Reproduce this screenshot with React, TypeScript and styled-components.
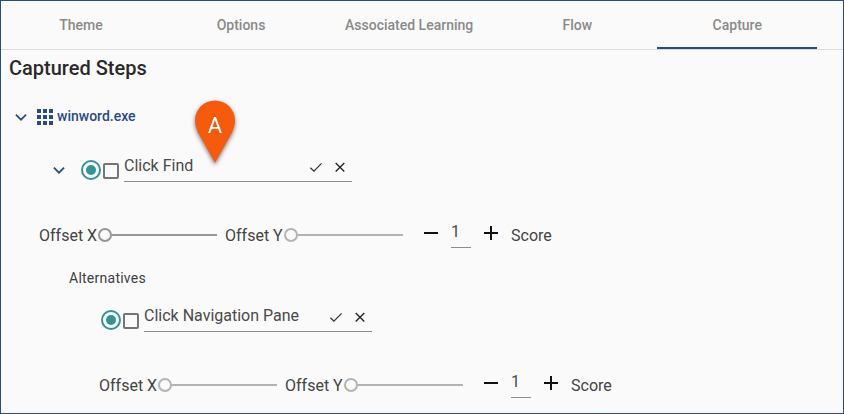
import React from "react";
import styled, { createGlobalStyle } from "styled-components";

const navy = "#2a4b87";
const teal = "#349394";

const GlobalStyle = createGlobalStyle`
  *, *::before, *::after { box-sizing: border-box; }
  html, body { margin: 0; padding: 0; }
  body { font-family: Roboto, "Liberation Sans", sans-serif; color: #333; background: #fafafa; }
`;

const Panel = styled.main`
  position: relative;
  width: 844px;
  height: 414px;
  overflow: hidden;
  border: 1px solid ${navy};
  background: #fafafa;
`;

const TabBar = styled.nav`
  display: flex;
  height: 49px;
  border-bottom: 1px solid #d9d9d9;
`;

const Tab = styled.div<{ $active?: boolean }>`
  display: flex;
  align-items: center;
  justify-content: center;
  min-width: 160px;
  height: 48px;
  padding: ${(p) => (p.$active ? "2px 24px 0" : "0 24px")};
  border-bottom: ${(p) => (p.$active ? `2px solid ${navy}` : "0")};
  font-size: 14px;
  font-weight: 500;
  color: #8a8a8a;
  white-space: nowrap;
`;

const Heading = styled.h2`
  margin: 0;
  padding-left: 8px;
  font-size: 20px;
  line-height: 36px;
  font-weight: 500;
  color: #2a2a2a;
`;

const AppRow = styled.div`
  display: flex;
  align-items: center;
  height: 62px;
  padding-left: 14px;
  font-size: 14px;
  font-weight: 500;
  color: ${navy};
`;

const AppName = styled.span`
  padding-bottom: 2px;
`;

const GridIcon = styled.svg`
  width: 16px;
  height: 16px;
  margin: 0 4px 0 10px;
`;

const StepRow = styled.div<{ $indent: number }>`
  display: flex;
  align-items: center;
  height: 44px;
  padding-left: ${(p) => p.$indent}px;
`;

const Radio = styled.span`
  display: grid;
  place-items: center;
  width: 20px;
  height: 20px;
  border: 2px solid ${teal};
  border-radius: 50%;

  &::after {
    content: "";
    width: 10px;
    height: 10px;
    border-radius: 50%;
    background: ${teal};
  }
`;

const Checkbox = styled.span`
  width: 16px;
  height: 16px;
  margin: 2px 5px 0 2px;
  border: 2px solid #757575;
  border-radius: 2px;
`;

const Field = styled.div`
  display: flex;
  align-items: center;
  width: 228px;
  height: 32px;
  margin-top: -8px;
  border-bottom: 1px solid #8c8c8c;
  font-size: 16px;
  color: #4a4a4a;
`;

const FieldText = styled.span`
  flex: 1;
  white-space: nowrap;
`;

const FieldIcons = styled.span`
  display: flex;
  gap: 8px;
  padding: 2px 4px 0 0;
`;

const ControlRow = styled.div<{ $indent: number }>`
  display: flex;
  align-items: center;
  height: 40px;
  margin: 23px 0 10px;
  padding-left: ${(p) => p.$indent}px;
  font-size: 16px;
  color: #444;
`;

const Label = styled.span<{ $width: number }>`
  width: ${(p) => p.$width}px;
  white-space: nowrap;
`;

const Slider = styled.div<{ $dark?: boolean }>`
  --tone: ${(p) => (p.$dark ? "#969696" : "#b3b3b3")};
  display: flex;
  align-items: center;
  width: 128px;
  padding: 0 8px 0 1px;

  &::before {
    content: "";
    width: 14px;
    height: 14px;
    border: 2px solid var(--tone);
    border-radius: 50%;
  }

  &::after {
    content: "";
    flex: 1;
    height: 2px;
    background: var(--tone);
  }
`;

const Stepper = styled.div`
  display: flex;
  align-items: center;
  height: 26px;
  margin: 0 8px;
`;

const StepIcon = styled.svg`
  width: 24px;
  height: 24px;
  margin-top: -4px;
`;

const NumberField = styled.span`
  width: 20px;
  height: 32px;
  margin: -6px 8px 0;
  border-bottom: 1px solid #8c8c8c;
  line-height: 31px;
  color: #4a4a4a;
`;

const Alternatives = styled.div`
  height: 26px;
  margin-bottom: 7px;
  padding-left: 68px;
  font-size: 14px;
  letter-spacing: 0.25px;
  line-height: 26px;
  color: #404040;
`;

const Pin = styled.svg`
  position: absolute;
  left: 187px;
  top: 93px;
  width: 56px;
  height: 78px;
  filter: drop-shadow(0 2px 2px rgba(0, 0, 0, 0.5));
`;

const Chevron = () => (
  <svg width="12" height="12" viewBox="0 0 12 12" fill="none" stroke={navy} strokeWidth="1.8">
    <path d="M.9 3.7 6 8.7l5.1-5" />
  </svg>
);

const ChevronSlot = styled.span`
  display: flex;
  width: 28px;
`;

const tabs = ["Theme", "Options", "Associated Learning", "Flow", "Capture"];

function Step({ text, indent, expandable }: { text: string; indent: number; expandable?: boolean }) {
  return (
    <StepRow $indent={indent}>
      {expandable && (
        <ChevronSlot>
          <Chevron />
        </ChevronSlot>
      )}
      <Radio />
      <Checkbox />
      <Field>
        <FieldText>{text}</FieldText>
        <FieldIcons>
          <svg width="16" height="16" viewBox="0 0 16 16" fill="none" stroke="#333" strokeWidth="1.2">
            <path d="m2.4 8.7 3.5 3.4 7.7-7.7" />
          </svg>
          <svg width="16" height="16" viewBox="0 0 16 16" fill="none" stroke="#222" strokeWidth="1.35">
            <path d="m3.7 4 8.6 8.4M12.3 4l-8.6 8.4" />
          </svg>
        </FieldIcons>
      </Field>
    </StepRow>
  );
}

function Controls({ indent, dark }: { indent: number; dark?: boolean }) {
  return (
    <ControlRow $indent={indent}>
      <Label $width={58}>Offset X</Label>
      <Slider $dark={dark} />
      <Label $width={58}>Offset Y</Label>
      <Slider />
      <Stepper>
        <StepIcon viewBox="0 0 24 24" stroke="#111" strokeWidth="2">
          <path d="M5 12h14" />
        </StepIcon>
        <NumberField>1</NumberField>
        <StepIcon viewBox="0 0 24 24" stroke="#111" strokeWidth="2">
          <path d="M5 12h14M12 5v14" />
        </StepIcon>
      </Stepper>
      <Label $width={50}>Score</Label>
    </ControlRow>
  );
}

export default function App() {
  return (
    <>
      <GlobalStyle />
      <Panel>
        <TabBar>
          {tabs.map((t) => (
            <Tab key={t} $active={t === "Capture"}>
              {t}
            </Tab>
          ))}
        </TabBar>
        <Heading>Captured Steps</Heading>
        <AppRow>
          <Chevron />
          <GridIcon viewBox="0 0 16 16" fill={navy}>
            {[0, 6, 12].map((y) => [0, 6, 12].map((x) => <rect key={`${x}-${y}`} x={x} y={y} width="4" height="4" />))}
          </GridIcon>
          <AppName>winword.exe</AppName>
        </AppRow>
        <Step text="Click Find" indent={52} expandable />
        <Controls indent={38} dark />
        <Alternatives>Alternatives</Alternatives>
        <Step text="Click Navigation Pane" indent={100} />
        <Controls indent={98} />
        <Pin viewBox="0 0 56 78">
          <path d="M27 69 10 38.5C8 34 7 30.5 7 26.5a20 20 0 0 1 40 0c0 4-1 7.500-3 12Z" fill="#f65a0d" />
          <text x="27" y="39" textAnchor="middle" fill="#fff" fontFamily="Roboto, sans-serif" fontSize="22">
            A
          </text>
        </Pin>
      </Panel>
    </>
  );
}
